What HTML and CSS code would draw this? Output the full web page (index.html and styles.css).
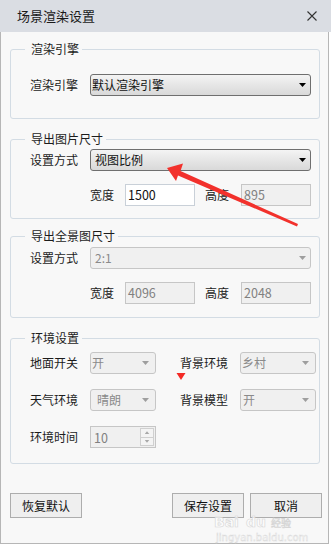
FILE: index.html
```
<!DOCTYPE html>
<html lang="zh-CN">
<head>
<meta charset="utf-8">
<title>场景渲染设置</title>
<link rel="stylesheet" href="styles.css">
</head>
<body>
<div class="window">
  <div class="titlebar">
    <span class="title">场景渲染设置</span>
    <svg class="close" width="10" height="10" viewBox="0 0 10 10"><path d="M0.5 0.5L9.5 9.5M9.5 0.5L0.5 9.5" stroke="#333" stroke-width="1.1" fill="none"/></svg>
  </div>
  <div class="body">
    <fieldset class="group g1">
      <legend>渲染引擎</legend>
      <div class="row">
        <span class="label">渲染引擎</span>
        <div class="select wide tight"><span>默认渲染引擎</span><span class="arrow"></span></div>
      </div>
    </fieldset>

    <fieldset class="group g2">
      <legend>导出图片尺寸</legend>
      <div class="row">
        <span class="label">设置方式</span>
        <div class="select wide"><span>视图比例</span><span class="arrow"></span></div>
      </div>
      <div class="row sizes">
        <span class="label-s">宽度</span>
        <div class="input">1500</div>
        <span class="label-s second">高度</span>
        <div class="input dis">895</div>
      </div>
    </fieldset>

    <fieldset class="group g3">
      <legend>导出全景图尺寸</legend>
      <div class="row">
        <span class="label">设置方式</span>
        <div class="select wide dis"><span>2:1</span><span class="arrow"></span></div>
      </div>
      <div class="row sizes">
        <span class="label-s">宽度</span>
        <div class="input dis">4096</div>
        <span class="label-s second">高度</span>
        <div class="input dis">2048</div>
      </div>
    </fieldset>

    <fieldset class="group g4">
      <legend>环境设置</legend>
      <div class="env">
        <span class="label">地面开关</span>
        <div class="select small dis p1"><span>开</span><span class="arrow"></span></div>
        <span></span>
        <span class="label">背景环境</span>
        <div class="select mid dis p1"><span>乡村</span><span class="arrow"></span></div>

        <span class="label">天气环境</span>
        <div class="select small dis p6"><span>晴朗</span><span class="arrow"></span></div>
        <span></span>
        <span class="label">背景模型</span>
        <div class="select mid dis p2"><span>开</span><span class="arrow"></span></div>

        <span class="label">环境时间</span>
        <div class="spin">
          <span class="spin-val">10</span>
          <span class="spin-btns">
            <span class="spin-btn"><span class="tri up"></span></span>
            <span class="spin-btn"><span class="tri down"></span></span>
          </span>
        </div>
      </div>
    </fieldset>

    <div class="footer">
      <button class="btn">恢复默认</button>
      <div class="right-btns">
        <button class="btn">保存设置</button>
        <button class="btn">取消</button>
      </div>
    </div>
  </div>

  <svg class="overlay" width="331" height="545" viewBox="0 0 331 545">
    <polygon points="167,168 183,163.5 180.5,171 298,224 297,226.5 178,175.5 176,181" fill="#f2312c"/>
    <polygon points="176.5,373 185.5,373 181,380" fill="#f42a25"/>
    <text x="214" y="527" class="wm wm-big">Bai</text>
    <text x="246" y="527" class="wm wm-big">du</text>
    <text x="271" y="527" class="wm wm-cn">经验</text>
    <text x="216" y="541" class="wm wm-url">jingyan.baidu.com</text>
  </svg>
</div>
</body>
</html>
```

FILE: styles.css
```
* {
  box-sizing: border-box;
}

body {
  margin: 0;
  background: #ffffff;
  font-family: "Noto Sans CJK SC", "Microsoft YaHei", sans-serif;
  font-size: 12px;
  color: #1c1c1c;
}

.window {
  position: relative;
  width: 331px;
  height: 545px;
}

.titlebar {
  height: 32px;
  background: #dadde3;
  display: flex;
  align-items: center;
  justify-content: space-between;
  padding: 0 14px 0 17px;
}

.title {
  font-size: 13px;
  line-height: 16px;
  color: #1a1a1a;
}

.close {
  display: block;
}

.body {
  width: 329px;
  height: 512px;
  border: 1px solid #b6b6b6;
  border-top: none;
  background: #f8f8f8;
  padding: 9px 8px 0 9px;
}

.group {
  margin: 0;
  min-width: 0;
  border: 1px solid #d3dce4;
  border-radius: 3px;
  padding: 0 3px 0 19px;
}

.group legend {
  margin-left: -5px;
  padding: 0 3px 0 6px;
  font-size: 12px;
  line-height: 16px;
}

.g1 {
  padding-top: 17px;
  padding-bottom: 22px;
}

.g2 {
  margin-top: 12px;
  padding-top: 2px;
  padding-bottom: 12px;
}

.g3 {
  margin-top: 9px;
  padding-top: 3px;
  padding-bottom: 13px;
}

.g4 {
  margin-top: 12px;
  padding-top: 6px;
  padding-bottom: 15px;
}

.row {
  display: flex;
  align-items: center;
  height: 22px;
}

.sizes {
  margin-top: 13px;
  padding-left: 60px;
}

.label {
  width: 60px;
  flex: none;
  line-height: 16px;
}

.label-s {
  width: 35px;
  flex: none;
  line-height: 16px;
}

.label-s.second {
  width: 36px;
  margin-left: 10px;
}

.select {
  height: 22px;
  border: 1px solid #6f6f6f;
  border-radius: 3px;
  background: linear-gradient(#f4f4f4, #e6e6e6 50%, #d9d9d9);
  display: flex;
  align-items: center;
  justify-content: space-between;
  padding: 0 4px 0 4px;
  line-height: 16px;
  color: #111;
  flex: none;
}

.select.wide {
  width: 221px;
}

.select.tight {
  padding-left: 1px;
}

.select.small {
  width: 66px;
  padding-right: 6px;
}

.select.mid {
  width: 76px;
  padding-right: 6px;
}

.select.p1 { padding-left: 1px; }
.select.p2 { padding-left: 2px; }
.select.p6 { padding-left: 6px; }

.arrow {
  width: 7px;
  height: 4px;
  background: #000;
  clip-path: polygon(0 0, 100% 0, 50% 100%);
  flex: none;
}

.select.dis {
  border-color: #c6c6c6;
  background: #f0f0f0;
  color: #8a8a8a;
}

.select.dis .arrow {
  background: #9e9e9e;
}

.input {
  width: 70px;
  height: 22px;
  flex: none;
  border: 1px solid #c9d0d8;
  background: #ffffff;
  padding-left: 2px;
  line-height: 20px;
  font-size: 12.5px;
  color: #111;
}

.input.dis {
  border-color: #c6c6c6;
  background: #f0f0f0;
  color: #808080;
}

.env {
  display: grid;
  grid-template-columns: 60px 66px 24px 60px 76px;
  grid-auto-rows: 22px;
  row-gap: 15px;
  align-items: center;
}

.spin {
  width: 66px;
  height: 22px;
  border: 1px solid #c6c6c6;
  background: #f0f0f0;
  display: flex;
  align-items: center;
  justify-content: space-between;
  padding: 0 1px 0 3px;
  color: #808080;
  font-size: 12.5px;
}

.spin-btns {
  display: flex;
  flex-direction: column;
  width: 14px;
  height: 18px;
  border: 1px solid #d0d0d0;
  background: #f4f4f4;
}

.spin-btn {
  flex: 1;
  display: flex;
  align-items: center;
  justify-content: center;
}

.spin-btn + .spin-btn {
  border-top: 1px solid #d0d0d0;
}

.tri {
  width: 5px;
  height: 3px;
  background: #a8a8a8;
}

.tri.up {
  clip-path: polygon(50% 0, 100% 100%, 0 100%);
}

.tri.down {
  clip-path: polygon(0 0, 100% 0, 50% 100%);
}

.footer {
  margin-top: 29px;
  margin-right: -2px;
  display: flex;
  justify-content: space-between;
}

.right-btns {
  display: flex;
  gap: 6px;
}

.btn {
  width: 72px;
  height: 25px;
  border: 1px solid #adadad;
  background: #efefef;
  font-family: "Noto Sans CJK SC", "Microsoft YaHei", sans-serif;
  font-size: 12px;
  line-height: 16px;
  color: #111;
  padding: 0;
  margin: 0;
}

.overlay {
  position: absolute;
  left: 0;
  top: 0;
  pointer-events: none;
}

.wm {
  fill: #ffffff;
  fill-opacity: 0.7;
  stroke: #d6d6d6;
  stroke-width: 0.6;
  font-family: "DejaVu Sans", sans-serif;
}

.wm-big {
  font-size: 14px;
  font-weight: bold;
}

.wm-cn {
  font-family: "Noto Sans CJK SC", sans-serif;
  font-size: 10px;
}

.wm-url {
  font-size: 10px;
  stroke-width: 0.4;
}
```
